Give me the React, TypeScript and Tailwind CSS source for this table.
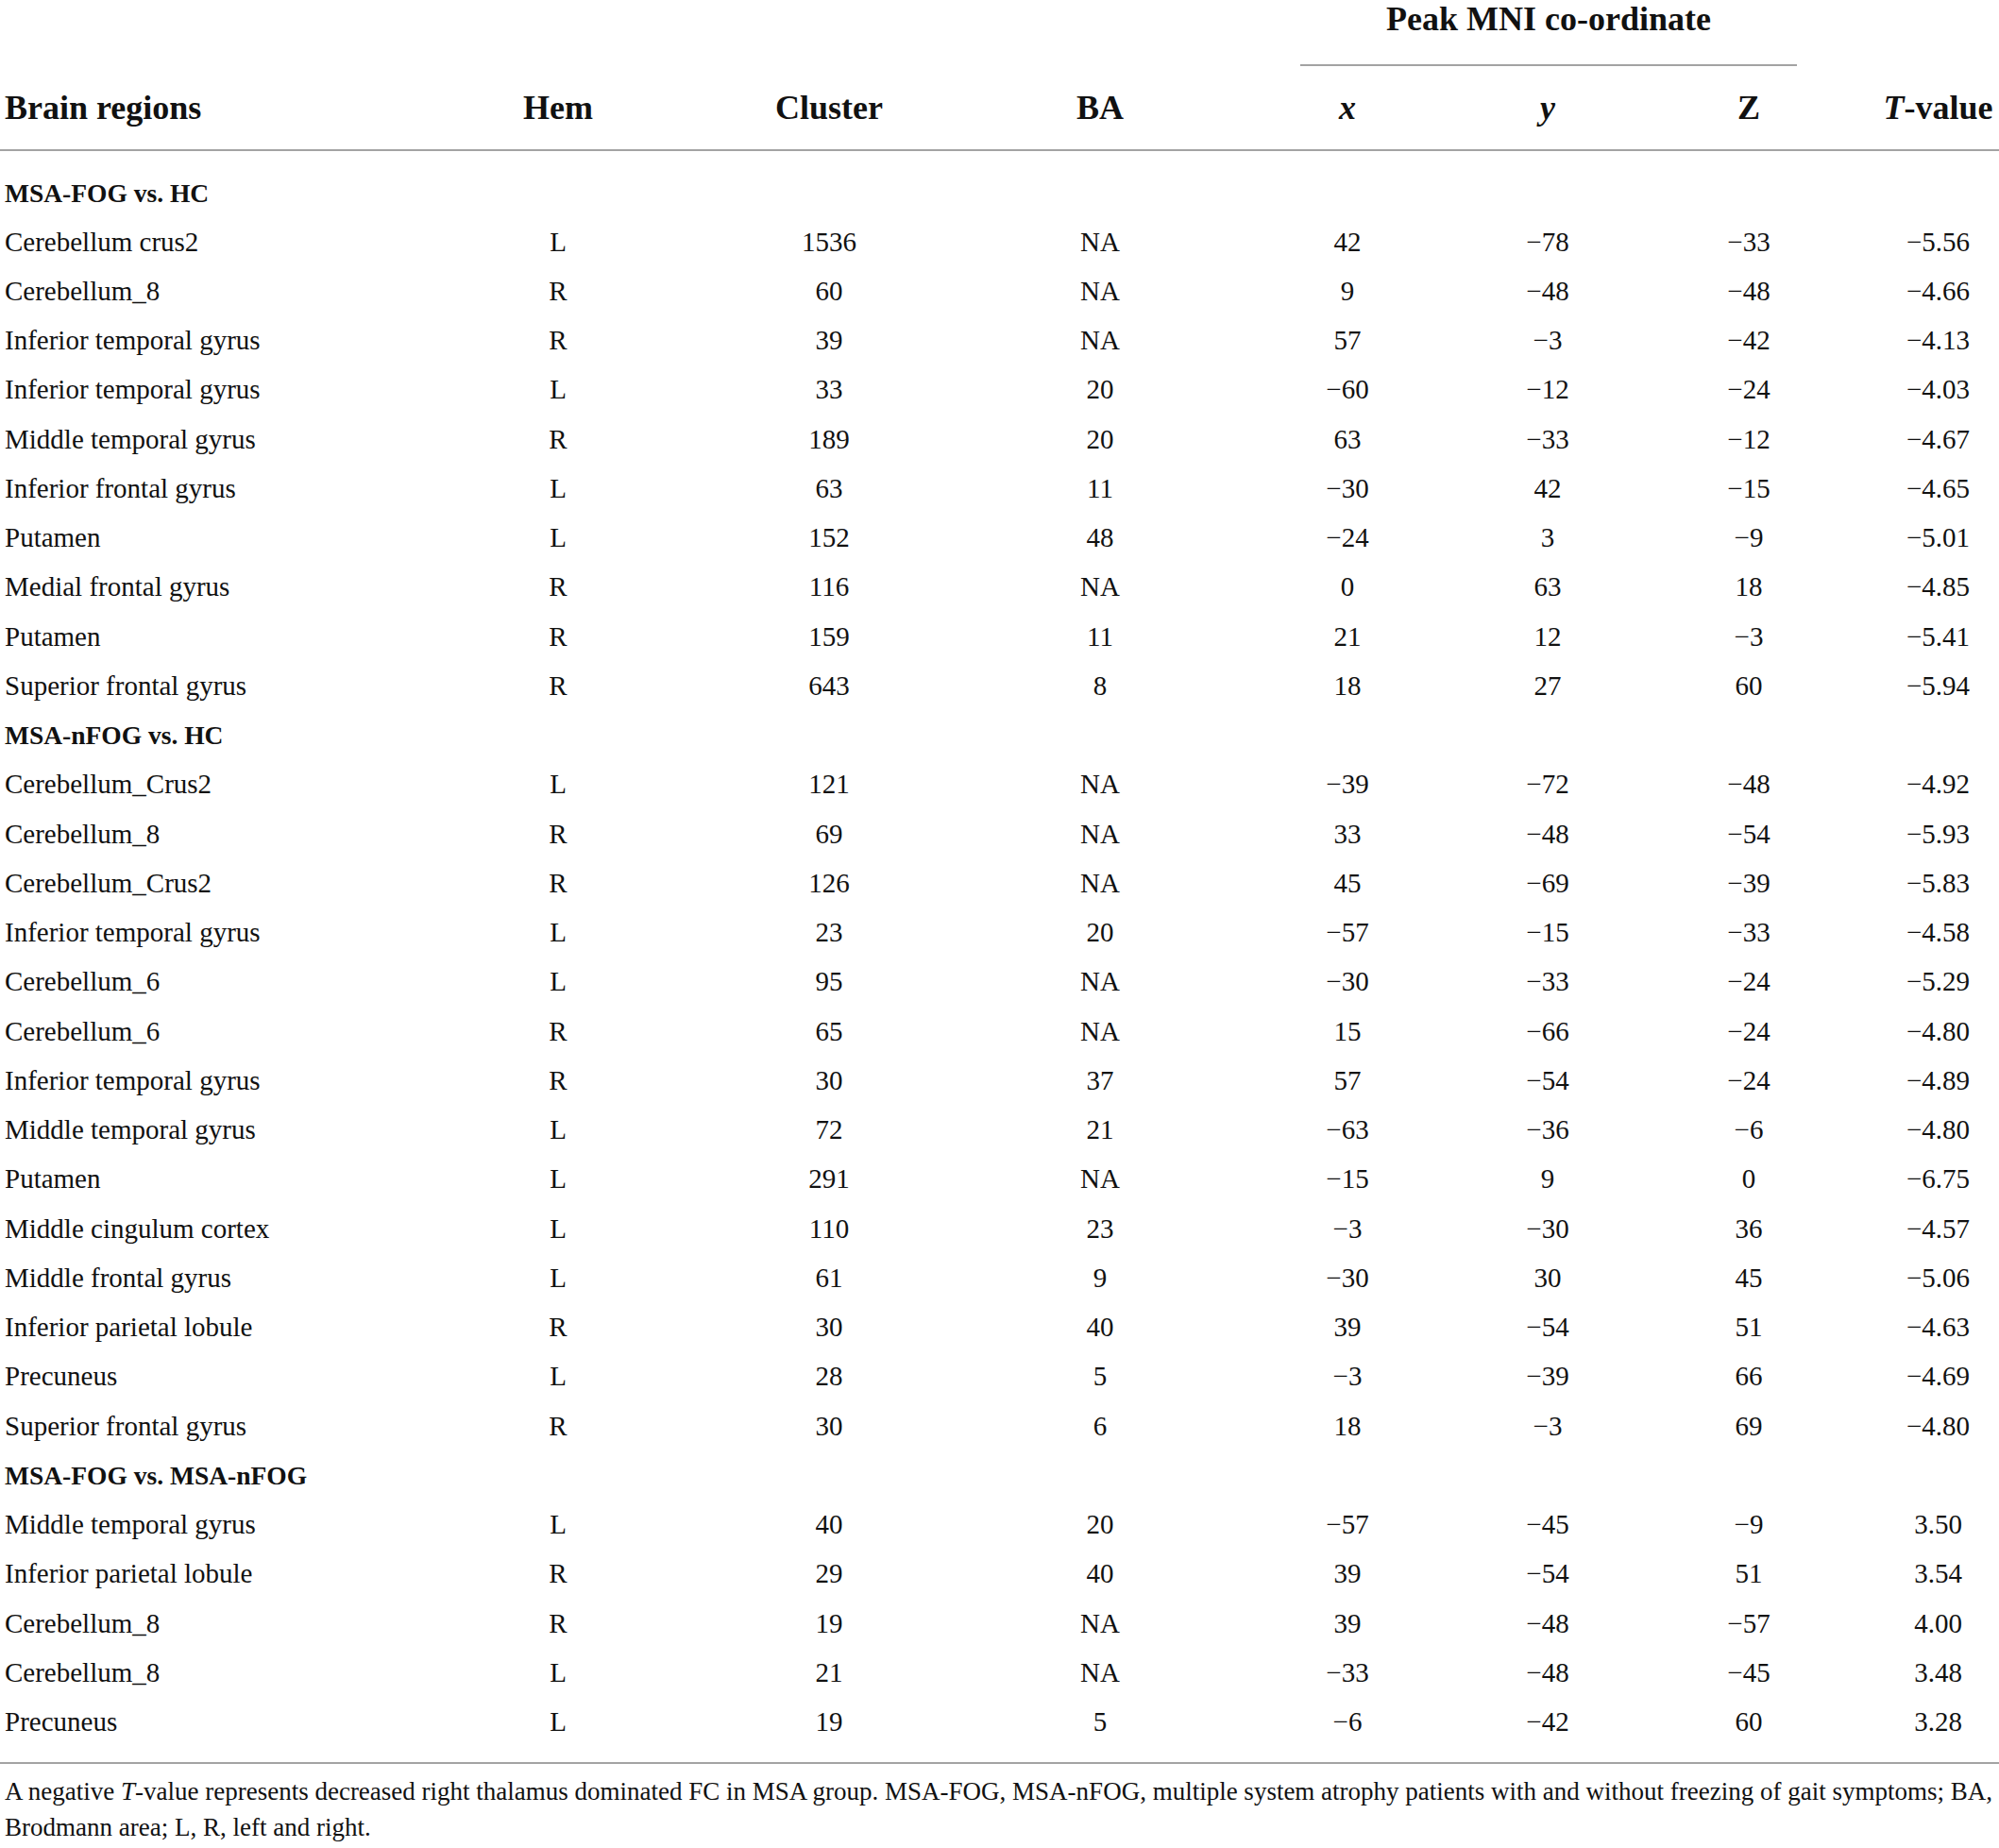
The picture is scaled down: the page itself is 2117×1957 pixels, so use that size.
import React from "react";

type Row = [string, string, string, string, string, string, string, string];

const groups: { title: string; rows: Row[] }[] = [
  {
    title: "MSA-FOG vs. HC",
    rows: [
      ["Cerebellum crus2", "L", "1536", "NA", "42", "−78", "−33", "−5.56"],
      ["Cerebellum_8", "R", "60", "NA", "9", "−48", "−48", "−4.66"],
      ["Inferior temporal gyrus", "R", "39", "NA", "57", "−3", "−42", "−4.13"],
      ["Inferior temporal gyrus", "L", "33", "20", "−60", "−12", "−24", "−4.03"],
      ["Middle temporal gyrus", "R", "189", "20", "63", "−33", "−12", "−4.67"],
      ["Inferior frontal gyrus", "L", "63", "11", "−30", "42", "−15", "−4.65"],
      ["Putamen", "L", "152", "48", "−24", "3", "−9", "−5.01"],
      ["Medial frontal gyrus", "R", "116", "NA", "0", "63", "18", "−4.85"],
      ["Putamen", "R", "159", "11", "21", "12", "−3", "−5.41"],
      ["Superior frontal gyrus", "R", "643", "8", "18", "27", "60", "−5.94"],
    ],
  },
  {
    title: "MSA-nFOG vs. HC",
    rows: [
      ["Cerebellum_Crus2", "L", "121", "NA", "−39", "−72", "−48", "−4.92"],
      ["Cerebellum_8", "R", "69", "NA", "33", "−48", "−54", "−5.93"],
      ["Cerebellum_Crus2", "R", "126", "NA", "45", "−69", "−39", "−5.83"],
      ["Inferior temporal gyrus", "L", "23", "20", "−57", "−15", "−33", "−4.58"],
      ["Cerebellum_6", "L", "95", "NA", "−30", "−33", "−24", "−5.29"],
      ["Cerebellum_6", "R", "65", "NA", "15", "−66", "−24", "−4.80"],
      ["Inferior temporal gyrus", "R", "30", "37", "57", "−54", "−24", "−4.89"],
      ["Middle temporal gyrus", "L", "72", "21", "−63", "−36", "−6", "−4.80"],
      ["Putamen", "L", "291", "NA", "−15", "9", "0", "−6.75"],
      ["Middle cingulum cortex", "L", "110", "23", "−3", "−30", "36", "−4.57"],
      ["Middle frontal gyrus", "L", "61", "9", "−30", "30", "45", "−5.06"],
      ["Inferior parietal lobule", "R", "30", "40", "39", "−54", "51", "−4.63"],
      ["Precuneus", "L", "28", "5", "−3", "−39", "66", "−4.69"],
      ["Superior frontal gyrus", "R", "30", "6", "18", "−3", "69", "−4.80"],
    ],
  },
  {
    title: "MSA-FOG vs. MSA-nFOG",
    rows: [
      ["Middle temporal gyrus", "L", "40", "20", "−57", "−45", "−9", "3.50"],
      ["Inferior parietal lobule", "R", "29", "40", "39", "−54", "51", "3.54"],
      ["Cerebellum_8", "R", "19", "NA", "39", "−48", "−57", "4.00"],
      ["Cerebellum_8", "L", "21", "NA", "−33", "−48", "−45", "3.48"],
      ["Precuneus", "L", "19", "5", "−6", "−42", "60", "3.28"],
    ],
  },
];

const GRID =
  "grid grid-cols-[447px_288px_286px_288px_236px_188px_238px_146px]";

function DataRow({ r }: { r: Row }) {
  return (
    <div className={`${GRID} h-[52.26px] items-center text-[29px]`}>
      <div className="pl-[5px] whitespace-nowrap">{r[0]}</div>
      <div className="text-center">{r[1]}</div>
      <div className="text-center">{r[2]}</div>
      <div className="text-center">{r[3]}</div>
      <div className="text-center">{r[4]}</div>
      <div className="text-center">{r[5]}</div>
      <div className="text-center">{r[6]}</div>
      <div className="pl-[17px] text-center">{r[7]}</div>
    </div>
  );
}

export default function App() {
  return (
    <div className="w-[2117px] min-h-[1957px] bg-white text-[#111111] font-['Liberation_Serif',serif]">
      {/* header */}
      <div className={`${GRID} font-bold text-[36px]`}>
        <div className="col-start-5 col-span-3 flex flex-col">
          <div className="h-[40px] flex items-center justify-center whitespace-nowrap">
            Peak MNI co-ordinate
          </div>
          <div className="h-[28px]" />
          <div className="h-[2px] mx-[68px] bg-[#a3a3a3]" />
        </div>
        <div className="col-start-1 h-[88px] flex items-center pl-[5px]">
          Brain regions
        </div>
        <div className="h-[88px] flex items-center justify-center">Hem</div>
        <div className="h-[88px] flex items-center justify-center">Cluster</div>
        <div className="h-[88px] flex items-center justify-center">BA</div>
        <div className="h-[88px] flex items-center justify-center italic">x</div>
        <div className="h-[88px] flex items-center justify-center italic">y</div>
        <div className="h-[88px] flex items-center justify-center">Z</div>
        <div className="h-[88px] flex items-center justify-center pl-[17px]">
          <span className="italic">T</span>-value
        </div>
      </div>
      <div className="h-[2px] bg-[#a3a3a3]" />

      {/* body */}
      <div className="pt-[18px] pb-[16px]">
        {groups.map((g) => (
          <div key={g.title}>
            <div className="h-[52.26px] flex items-center pl-[5px] font-bold text-[27.5px] whitespace-nowrap">
              {g.title}
            </div>
            {g.rows.map((r, i) => (
              <DataRow key={i} r={r} />
            ))}
          </div>
        ))}
      </div>
      <div className="h-[2px] bg-[#a3a3a3]" />

      {/* footnote */}
      <div className="mt-[10px] pl-[5px] text-[27px] leading-[38px] whitespace-nowrap">
        A negative <span className="italic">T</span>-value represents decreased
        right thalamus dominated FC in MSA group. MSA-FOG, MSA-nFOG, multiple
        system atrophy patients with and without freezing of gait symptoms; BA,
        <br />
        Brodmann area; L, R, left and right.
      </div>
    </div>
  );
}
